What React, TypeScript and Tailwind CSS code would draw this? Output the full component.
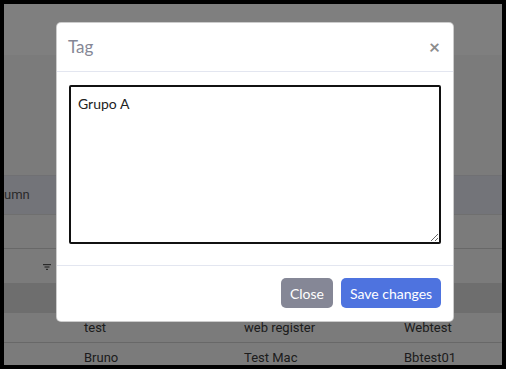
import React from "react";

export default function App() {
  const rowText = "text-[13px] text-[#3a3a3a]";
  return (
    <div className="w-[506px] h-[369px] bg-black pt-[4px] pl-[4px] pr-[4px] pb-[4px]" style={{ fontFamily: "Roboto, sans-serif" }}>
      <div className="relative w-[498px] h-[361px] bg-white overflow-hidden">
        {/* underlying page */}
        <div className="flex flex-col">
          <div className="h-[51px] bg-white" />
          <div className="h-[120px] bg-[#f6f6f6]" />
          <div className="h-[39px] bg-[#e7e8f3] border-t border-[#e0e0e6] flex items-center">
            <span className="text-[13px] text-[#555]">umn</span>
          </div>
          <div className="h-[34px] bg-[#f6f6f6] border-t border-[#dedede]" />
          <div className="h-[35px] bg-[#f6f6f6] border-t border-[#d0d0d0] flex items-center pl-[39px]">
            <svg width="8" height="6" viewBox="0 0 8 6" className="mt-[2px]">
              <rect x="0" y="0" width="8" height="1.2" fill="#555" />
              <rect x="1.5" y="2.4" width="5" height="1.2" fill="#555" />
              <rect x="3" y="4.8" width="2" height="1.2" fill="#555" />
            </svg>
          </div>
          <div className="h-[30px] bg-[#dddddd]" />
          <div className="h-[30px] bg-[#f6f6f6] border-b border-[#d0d0d0] flex items-center">
            <span className={`${rowText} w-[240px] pl-[80px]`}>test</span>
            <span className={`${rowText} w-[160px]`}>web register</span>
            <span className={`${rowText}`}>Webtest</span>
          </div>
          <div className="h-[30px] bg-[#f6f6f6] flex items-center">
            <span className={`${rowText} w-[240px] pl-[80px]`}>Bruno</span>
            <span className={`${rowText} w-[160px]`}>Test Mac</span>
            <span className={`${rowText}`}>Bbtest01</span>
          </div>
        </div>

        {/* overlay */}
        <div className="absolute inset-0 bg-black/50 pt-[18px] pl-[52px]" style={{ fontFamily: "Lato, 'Noto Sans', sans-serif" }}>
          <div className="w-[398px] h-[300px] bg-white rounded-[5px] border border-black/20 flex flex-col">
            <div className="h-[49px] border-b border-[#e3e6f0] flex items-center justify-between pl-[11px] pr-[13px]">
              <span className="text-[17px] text-[#858796]">Tag</span>
              <span className="text-[19px] font-bold text-[#8c8c8c] leading-none mb-[2px]">×</span>
            </div>
            <div className="h-[193px] pt-[13px] pl-[12px] pr-[12px]">
              <textarea
                defaultValue="Grupo A"
                className="block w-[372px] h-[159px] border-2 border-[#111] rounded-[2px] pt-[6px] pl-[7px] text-[14px] leading-[21px] text-[#222] outline-none"
                style={{ fontFamily: "Lato, 'Noto Sans', sans-serif" }}
              />
            </div>
            <div className="flex-1 border-t border-[#e3e6f0] flex items-center justify-end gap-[8px] pr-[12px] pb-[1px]">
              <button className="h-[30px] w-[52px] rounded-[5px] bg-[#858796] text-white text-[14px]">Close</button>
              <button className="h-[30px] w-[100px] rounded-[5px] bg-[#4e73df] text-white text-[14px]">Save changes</button>
            </div>
          </div>
        </div>
      </div>
    </div>
  );
}
